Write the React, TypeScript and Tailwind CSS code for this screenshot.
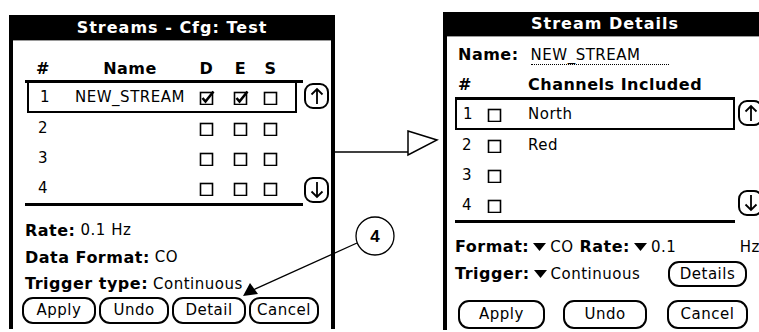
import React from 'react';

const bold = "font-['DejaVu_Sans',sans-serif] font-bold text-[16px] tracking-[0.5px]";
const norm = "font-['DejaVu_Sans',sans-serif] text-[15px] tracking-[0.5px]";

function Box({ checked = false }: { checked?: boolean }) {
  return (
    <svg width="16" height="15" viewBox="0 0 16 15" className="block">
      <rect x="1.5" y="2.5" width="12" height="12" fill="none" stroke="black" strokeWidth="1.6" />
      {checked && <path d="M3.5 8 L6.5 11.5 L14.5 1.5" fill="none" stroke="black" strokeWidth="2.6" />}
    </svg>
  );
}

function ScrollBtn({ dir }: { dir: 'up' | 'down' }) {
  return (
    <div className="w-[25px] h-[26px] border-2 border-black rounded-[9px] flex items-center justify-center">
      <svg width="14" height="18" viewBox="0 0 14 18">
        {dir === 'up' ? (
          <path d="M7 17 V2 M1.5 7.5 L7 2 L12.5 7.5" fill="none" stroke="black" strokeWidth="1.8" />
        ) : (
          <path d="M7 1 V16 M1.5 10.5 L7 16 L12.5 10.5" fill="none" stroke="black" strokeWidth="1.8" />
        )}
      </svg>
    </div>
  );
}

function Btn({ label, w, h = 'h-[27px]' }: { label: string; w: string; h?: string }) {
  return (
    <div className={`${w} ${h} ${norm} border-2 border-black rounded-[11px] flex items-center justify-center flex-none`}>
      {label}
    </div>
  );
}

function Drop() {
  return (
    <svg width="13" height="8" viewBox="0 0 13 8" className="mx-[4px] flex-none">
      <path d="M0 0 H13 L6.5 8 Z" fill="black" />
    </svg>
  );
}

function TitleBar({ text, h }: { text: string; h: string }) {
  return (
    <div className={`${h} bg-black border-b border-[#9a9a9a] flex items-center justify-center text-white font-['DejaVu_Sans',sans-serif] font-bold text-[16px] tracking-[1px]`}>
      {text}
    </div>
  );
}

const streamRows = [
  { n: '1', name: 'NEW_STREAM', d: true, e: true, s: false },
  { n: '2', name: '', d: false, e: false, s: false },
  { n: '3', name: '', d: false, e: false, s: false },
  { n: '4', name: '', d: false, e: false, s: false },
];

function StreamsPanel() {
  return (
    <div className="ml-[9px] mt-[15px] w-[326px] h-[314px] flex-none border-x-4 border-black flex flex-col">
      <TitleBar text="Streams - Cfg: Test" h="h-[26px]" />
      <div className="flex pl-[12px] pt-[16px]">
        <div className="w-[278px]">
          <div className={`h-[26px] border-b-[3px] border-black flex items-center ${bold}`}>
            <div className="w-[36px] text-center">#</div>
            <div className="w-[138px] text-center">Name</div>
            <div className="w-[15px] text-center">D</div>
            <div className="w-[15px] ml-[19px] text-center">E</div>
            <div className="w-[15px] ml-[15px] text-center">S</div>
          </div>
          {streamRows.map((r, i) => (
            <div
              key={r.n}
              className={`h-[30px] flex items-center ${norm} ${
                i === 0 ? 'ml-[2px] w-[270px] border-x-2 border-b-2 border-black' : ''
              } ${i === 3 ? 'border-b-[3px] border-black h-[33px]' : ''}`}
            >
              <div className={`${i === 0 ? 'w-[32px]' : 'w-[36px]'} text-center`}>{r.n}</div>
              <div className="w-[138px] text-center">{r.name}</div>
              <div className="w-[15px]"><Box checked={r.d} /></div>
              <div className="w-[15px] ml-[19px]"><Box checked={r.e} /></div>
              <div className="w-[15px] ml-[15px]"><Box checked={r.s} /></div>
            </div>
          ))}
        </div>
        <div className="ml-[1px] pt-[26px] pb-[3px] flex flex-col justify-between">
          <ScrollBtn dir="up" />
          <ScrollBtn dir="down" />
        </div>
      </div>
      <div className="pl-[12px] pt-[11px]">
        <div className="h-[27px] flex items-center">
          <span className={bold}>Rate:</span>
          <span className={`${norm} ml-[5px]`}>0.1 Hz</span>
        </div>
        <div className="h-[27px] flex items-center">
          <span className={bold}>Data Format:</span>
          <span className={`${norm} ml-[5px]`}>CO</span>
        </div>
        <div className="h-[26px] flex items-center">
          <span className={bold}>Trigger type:</span>
          <span className={`${norm} ml-[5px]`}>Continuous</span>
        </div>
      </div>
      <div className="flex gap-[3px] pl-[9px]">
        <Btn label="Apply" w="w-[74px]" />
        <Btn label="Undo" w="w-[70px]" />
        <Btn label="Detail" w="w-[74px]" />
        <Btn label="Cancel" w="w-[70px]" />
      </div>
    </div>
  );
}

const channelRows = [
  { n: '1', name: 'North' },
  { n: '2', name: 'Red' },
  { n: '3', name: '' },
  { n: '4', name: '' },
];

function DetailsPanel() {
  return (
    <div className="mt-[12px] w-[324px] h-[318px] flex-none border-x-4 border-black flex flex-col">
      <TitleBar text="Stream Details" h="h-[25px]" />
      <div className="pl-[8px]">
        <div className="mt-[5px] h-[26px] ml-[3px] flex items-center">
          <span className={bold}>Name:</span>
          <span className={`${norm} ml-[12px] w-[138px] border-b border-dotted border-black leading-[18px]`}>
            NEW_STREAM
          </span>
        </div>
        <div className="flex">
          <div className="w-[280px]">
            <div className={`h-[32px] pt-[4px] border-b-[3px] border-black flex items-center ${bold}`}>
              <div className="w-[73px] pl-[3px]">#</div>
              <div>Channels Included</div>
            </div>
            {channelRows.map((r, i) => (
              <div
                key={r.n}
                className={`h-[30px] flex items-center ${norm} ${
                  i === 0 ? 'border-x-2 border-b-2 border-black' : ''
                } ${i === 3 ? 'border-b-[3px] border-black h-[33px]' : ''}`}
              >
                <div className={`${i === 0 ? 'w-[22px]' : 'w-[24px]'} text-center`}>{r.n}</div>
                <div className="ml-[8px] w-[15px]"><Box /></div>
                <div className="ml-[26px]">{r.name}</div>
              </div>
            ))}
          </div>
          <div className="ml-[3px] pt-[32px] pb-[7px] flex flex-col justify-between">
            <ScrollBtn dir="up" />
            <ScrollBtn dir="down" />
          </div>
        </div>
        <div className="mt-[11px] h-[26px] w-[305px] flex items-center">
          <span className={bold}>Format:</span>
          <Drop />
          <span className={norm}>CO</span>
          <span className={`${bold} ml-[6px]`}>Rate:</span>
          <Drop />
          <span className={norm}>0.1</span>
          <span className={`${norm} ml-auto`}>Hz</span>
        </div>
        <div className="h-[28px] w-[292px] flex items-center">
          <span className={bold}>Trigger:</span>
          <Drop />
          <span className={norm}>Continuous</span>
          <div className="ml-auto">
            <Btn label="Details" w="w-[79px]" h="h-[26px]" />
          </div>
        </div>
        <div className="mt-[12px] ml-[3px] flex">
          <Btn label="Apply" w="w-[87px]" h="h-[29px]" />
          <div className="ml-[18px]"><Btn label="Undo" w="w-[84px]" h="h-[29px]" /></div>
          <div className="ml-[20px]"><Btn label="Cancel" w="w-[81px]" h="h-[29px]" /></div>
        </div>
      </div>
    </div>
  );
}

export default function App() {
  return (
    <div className="relative w-[759px] h-[332px] overflow-hidden bg-white flex text-black">
      <StreamsPanel />
      <div className="w-[108px] flex-none">
        <svg width="108" height="332" viewBox="0 0 108 332">
          <line x1="0" y1="152" x2="73" y2="152" stroke="black" strokeWidth="1.5" />
          <polygon points="73,131 102,140 73,155" fill="white" stroke="black" strokeWidth="1.5" />
        </svg>
      </div>
      <DetailsPanel />
      <svg className="absolute inset-0 pointer-events-none" width="759" height="332" viewBox="0 0 759 332">
        <circle cx="375" cy="236" r="19" fill="white" stroke="black" strokeWidth="1.3" />
        <text x="375" y="242" textAnchor="middle" fontFamily="Liberation Sans, sans-serif" fontWeight="bold" fontSize="17">
          4
        </text>
        <line x1="357" y1="243" x2="253" y2="290" stroke="black" strokeWidth="1.3" />
        <polygon points="243,296 250,283 258,294" fill="black" />
      </svg>
    </div>
  );
}
